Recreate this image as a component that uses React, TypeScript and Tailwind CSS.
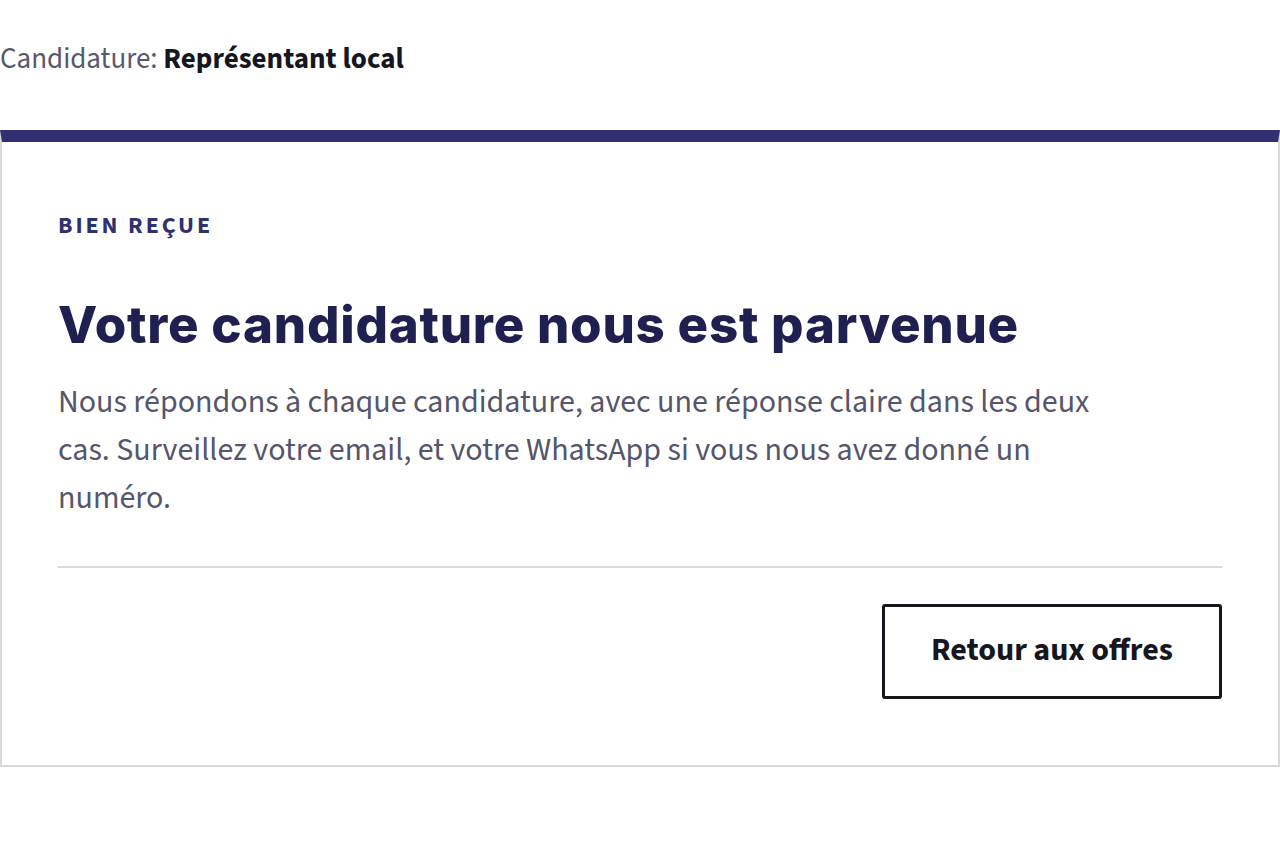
export default function App() {
  const sans = "font-['Source_Sans_3','Source_Sans_Pro',Lato,'Noto_Sans',sans-serif]";
  return (
    <div className="bg-white min-h-[846px] w-[1280px]">
      <div className={`${sans} h-[130px] pt-[40px] text-[29px] leading-[38px] text-[#58586c]`}>
        Candidature: <span className="font-bold text-[#16161f]">Représentant local</span>
      </div>
      <div className="border-2 border-[#d9d9d5] border-t-[12px] border-t-[#2f3173] px-[56px] pt-[70px] pb-[66px]">
        <div className={`${sans} text-[24px] leading-[28px] font-bold tracking-[0.12em] text-[#2e3070]`}>BIEN REÇUE</div>
        <h1 className="mt-[55px] font-['Inter',sans-serif] font-extrabold text-[51px] leading-[60px] tracking-[0.015em] text-[#1f2050]">
          Votre candidature nous est parvenue
        </h1>
        <p className={`${sans} mt-[23px] max-w-[1060px] text-[32px] leading-[48px] text-[#55566b]`}>
          Nous répondons à chaque candidature, avec une réponse claire dans les deux cas. Surveillez votre email, et votre WhatsApp si vous nous avez donné un numéro.
        </p>
        <div className="mt-[44px] border-t-2 border-[#dcdcd4]" />
        <div className="mt-[36px] flex justify-end">
          <button className={`${sans} w-[340px] h-[95px] pb-[4px] border-[3px] border-[#16161f] rounded-[3px] text-[32px] leading-[40px] font-bold text-[#16161f]`}>
            Retour aux offres
          </button>
        </div>
      </div>
    </div>
  );
}
